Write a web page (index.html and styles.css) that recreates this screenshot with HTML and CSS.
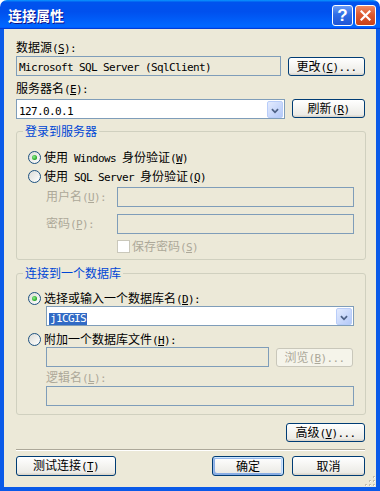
FILE: index.html
```html
<!DOCTYPE html>
<html lang="zh-CN">
<head>
  <meta charset="UTF-8">
  <meta name="viewport" content="width=device-width, initial-scale=1.0">
  <title>连接属性</title>
  <link rel="stylesheet" href="styles.css">
</head>
<body>
  <div class="window">
    <div class="titlebar">
      <span class="title">连接属性</span>
      <button class="tbtn help">?</button>
      <button class="tbtn close">
        <svg width="11" height="11" viewBox="0 0 11 11"><path d="M1.5 1.5 L9.5 9.5 M9.5 1.5 L1.5 9.5" stroke="#fff" stroke-width="2.2" stroke-linecap="square"/></svg>
      </button>
    </div>

    <div class="client">
      <div class="label">数据源<span class="en">(<u>S</u>):</span></div>
      <div class="row row-top">
        <div class="textbox readonly w-source"><span class="en">Microsoft SQL Server (SqlClient)</span></div>
        <button class="btn w-change">更改<span class="en">(<u>C</u>)...</span></button>
      </div>

      <div class="label label-gap">服务器名<span class="en">(<u>E</u>):</span></div>
      <div class="row row-server">
        <div class="combo w-server">
          <div class="combo-text"><span class="en">127.0.0.1</span></div>
          <div class="combo-btn">
            <svg width="16" height="17" viewBox="0 0 16 17"><path d="M4.5 7 L8 10.5 L11.5 7" fill="none" stroke="#4D6185" stroke-width="2"/></svg>
          </div>
        </div>
        <button class="btn w-refresh">刷新<span class="en">(<u>R</u>)</span></button>
      </div>

      <fieldset class="group group-login">
        <legend>登录到服务器</legend>
        <div class="radio-row">
          <span class="radio checked"></span>
          <span>使用<span class="en"> Windows </span>身份验证<span class="en">(<u>W</u>)</span></span>
        </div>
        <div class="radio-row radio-next">
          <span class="radio"></span>
          <span>使用<span class="en"> SQL Server </span>身份验证<span class="en">(<u>Q</u>)</span></span>
        </div>
        <div class="field-row first-field">
          <span class="field-label disabled">用户名<span class="en">(<u>U</u>):</span></span>
          <div class="textbox"></div>
        </div>
        <div class="field-row second-field">
          <span class="field-label disabled">密码<span class="en">(<u>P</u>):</span></span>
          <div class="textbox"></div>
        </div>
        <div class="check-row">
          <span class="checkbox"></span>
          <span class="disabled">保存密码<span class="en">(<u>S</u>)</span></span>
        </div>
      </fieldset>

      <fieldset class="group group-db">
        <legend>连接到一个数据库</legend>
        <div class="radio-row">
          <span class="radio checked"></span>
          <span>选择或输入一个数据库名<span class="en">(<u>D</u>):</span></span>
        </div>
        <div class="combo indent db-combo">
          <div class="combo-text"><span class="selected en">j1CGIS</span></div>
          <div class="combo-btn">
            <svg width="16" height="17" viewBox="0 0 16 17"><path d="M4.5 7 L8 10.5 L11.5 7" fill="none" stroke="#4D6185" stroke-width="2"/></svg>
          </div>
        </div>
        <div class="radio-row attach-row">
          <span class="radio"></span>
          <span>附加一个数据库文件<span class="en">(<u>H</u>):</span></span>
        </div>
        <div class="row indent file-row">
          <div class="textbox w-file"></div>
          <button class="btn btn-disabled w-browse">浏览<span class="en">(<u>B</u>)...</span></button>
        </div>
        <div class="label indent disabled logic-label">逻辑名<span class="en">(<u>L</u>):</span></div>
        <div class="textbox indent logic-box"></div>
      </fieldset>

      <div class="row row-advanced">
        <button class="btn w-advanced">高级<span class="en">(<u>V</u>)...</span></button>
      </div>

      <div class="separator"></div>

      <div class="row row-bottom">
        <button class="btn w-test">测试连接<span class="en">(<u>T</u>)</span></button>
        <div class="spacer"></div>
        <button class="btn btn-default w-ok">确定</button>
        <button class="btn w-cancel">取消</button>
      </div>

      <svg class="grip" width="11" height="11" viewBox="0 0 11 11">
        <rect x="8" y="0" width="2" height="2" fill="#C3BFAE"/>
        <rect x="4" y="4" width="2" height="2" fill="#C3BFAE"/>
        <rect x="8" y="4" width="2" height="2" fill="#C3BFAE"/>
        <rect x="0" y="8" width="2" height="2" fill="#C3BFAE"/>
        <rect x="4" y="8" width="2" height="2" fill="#C3BFAE"/>
        <rect x="8" y="8" width="2" height="2" fill="#C3BFAE"/>
        <rect x="9" y="1" width="1" height="1" fill="#fff"/>
        <rect x="5" y="5" width="1" height="1" fill="#fff"/>
        <rect x="9" y="5" width="1" height="1" fill="#fff"/>
        <rect x="1" y="9" width="1" height="1" fill="#fff"/>
        <rect x="5" y="9" width="1" height="1" fill="#fff"/>
        <rect x="9" y="9" width="1" height="1" fill="#fff"/>
      </svg>
    </div>
  </div>
</body>
</html>
```

FILE: styles.css
```css
* {
  box-sizing: border-box;
}

body {
  margin: 0;
  background-color: #fff;
  font-family: "Noto Sans CJK SC", sans-serif;
  font-size: 12px;
  color: #000;
}

.window {
  width: 380px;
  height: 491px;
  display: flex;
  flex-direction: column;
}

.titlebar {
  height: 29px;
  display: flex;
  align-items: flex-start;
  padding: 5px 4px 0 8px;
  border-radius: 7px 7px 0 0;
  background: linear-gradient(180deg, #0997ff, #0053ee 8%, #0050ee 40%, #06f 88%, #06f 93%, #005bff 95%, #003dd7 96%, #003dd7);
}

.title {
  flex: 1;
  color: #fff;
  font-size: 14px;
  font-weight: bold;
  line-height: 21px;
  text-shadow: 1px 1px #0f1089;
}

.tbtn {
  width: 21px;
  height: 21px;
  margin-left: 2px;
  padding: 0;
  border: 1px solid #fff;
  border-radius: 3px;
  display: flex;
  align-items: center;
  justify-content: center;
}

.help {
  background: linear-gradient(180deg, #6a9cf7, #2f6de6 45%, #1f55d6);
  color: #fff;
  font-family: "Liberation Sans", sans-serif;
  font-size: 17px;
  font-weight: bold;
  line-height: 19px;
}

.close {
  background: linear-gradient(180deg, #ee8b65, #dd5a31 45%, #c9411a);
}

.client {
  position: relative;
  flex: 1;
  background-color: #ece9d8;
  border: 4px solid #0a5ae8;
  border-top: none;
  padding: 12px 10px 0 12px;
}

.en {
  font-family: "DejaVu Sans Mono", monospace;
  font-size: 11px;
  letter-spacing: -0.62px;
}

.label {
  height: 12px;
  line-height: 12px;
  white-space: nowrap;
}

.label-gap {
  margin-top: 6px;
}

.disabled {
  color: #aca899;
}

.row {
  display: flex;
  align-items: flex-start;
}

.row-top {
  margin-top: 3px;
  gap: 7px;
}

.row-server {
  margin-top: 5px;
  gap: 7px;
}

.textbox {
  height: 20px;
  border: 1px solid #7f9db9;
  background-color: #ece9d8;
  padding-left: 2px;
  line-height: 18px;
  white-space: nowrap;
}

.textbox.readonly {
  background-color: #ece9d8;
}

.w-source {
  width: 265px;
}

.combo {
  height: 20px;
  display: flex;
  border: 1px solid #7f9db9;
  background-color: #fff;
  padding: 1px;
}

.combo-text {
  flex: 1;
  padding-left: 1px;
  line-height: 17px;
  white-space: nowrap;
}

.combo-btn {
  width: 16px;
  height: 17px;
  border: 1px solid #b9cdf9;
  border-radius: 2px;
  background: linear-gradient(135deg, #e3ebfe, #b4c9f8);
  display: flex;
}

.w-server {
  width: 269px;
}

.selected {
  display: inline-block;
  height: 12px;
  line-height: 12px;
  padding: 0 1px;
  margin-top: 2px;
  background-color: #316ac5;
  color: #fff;
}

.btn {
  height: 19px;
  margin-top: 1px;
  padding: 0;
  border: 1px solid #003c74;
  border-radius: 3px;
  background: linear-gradient(180deg, #fff, #ecebe6 86%, #d6d0c5);
  font-family: "Noto Sans CJK SC", sans-serif;
  font-size: 12px;
  line-height: 16px;
  color: #000;
  white-space: nowrap;
}

.btn-default {
  box-shadow: inset -1px 1px #cee7ff, inset 1px 2px #98b8ea, inset -2px 0 #bcd4f6, inset 1px -1px #89ade4, inset 2px -2px #89ade4;
}

.btn-disabled {
  border-color: #c9c7ba;
  background: #f5f4ea;
  color: #aca899;
}

.w-change {
  width: 77px;
}

.w-refresh {
  width: 73px;
  margin-top: 0;
}

.group {
  margin: 6px 0 0 0;
  padding: 14px 11px 6px 11px;
  border: 1px solid #d0d0bf;
  border-radius: 3px;
}

.group legend {
  height: 12px;
  line-height: 12px;
  margin-left: -5px;
  padding: 0 2px;
  color: #0046d5;
}

.group-db {
  margin-top: 7px;
  padding-top: 13px;
  padding-bottom: 8px;
}

.radio-row {
  height: 13px;
  display: flex;
  align-items: center;
  gap: 3px;
  line-height: 12px;
  white-space: nowrap;
}

.radio-next {
  margin-top: 6px;
}

.radio {
  position: relative;
  width: 13px;
  height: 13px;
  flex: none;
  border: 1px solid #1c5180;
  border-radius: 50%;
  background: linear-gradient(135deg, #dcdcd7, #fff);
}

.radio.checked::after {
  content: "";
  position: absolute;
  left: 3px;
  top: 3px;
  width: 5px;
  height: 5px;
  border-radius: 50%;
  background: radial-gradient(circle at 40% 40%, #8ef08e, #21a121 70%);
}

.field-row {
  height: 20px;
  display: flex;
  align-items: center;
  margin-left: 18px;
}

.first-field {
  margin-top: 4px;
}

.second-field {
  margin-top: 7px;
}

.field-label {
  width: 71px;
  line-height: 12px;
  white-space: nowrap;
}

.field-row .textbox {
  flex: 1;
}

.check-row {
  height: 13px;
  display: flex;
  align-items: center;
  gap: 2px;
  margin: 6px 0 0 89px;
  line-height: 12px;
  white-space: nowrap;
}

.checkbox {
  width: 13px;
  height: 13px;
  flex: none;
  border: 1px solid #cac8bb;
  background-color: #fff;
}

.indent {
  margin-left: 18px;
}

.db-combo {
  margin-top: 1px;
}

.attach-row {
  margin-top: 7px;
}

.file-row {
  margin-top: 1px;
  gap: 7px;
}

.w-file {
  width: 223px;
}

.w-browse {
  width: 77px;
}

.logic-label {
  margin-top: 4px;
}

.logic-box {
  margin-top: 3px;
}

.row-advanced {
  justify-content: flex-end;
  margin-top: 7px;
  padding-right: 1px;
}

.w-advanced {
  width: 79px;
}

.separator {
  margin-top: 7px;
  margin-right: 1px;
  border-top: 1px solid #aca899;
  border-bottom: 1px solid #fff;
}

.row-bottom {
  margin-top: 4px;
  padding-right: 1px;
  gap: 8px;
}

.row-bottom .btn {
  height: 20px;
}

.spacer {
  flex: 1;
}

.w-test {
  width: 100px;
}

.w-ok {
  width: 72px;
}

.w-cancel {
  width: 73px;
}

.grip {
  position: absolute;
  right: 0;
  bottom: 0;
}
```
